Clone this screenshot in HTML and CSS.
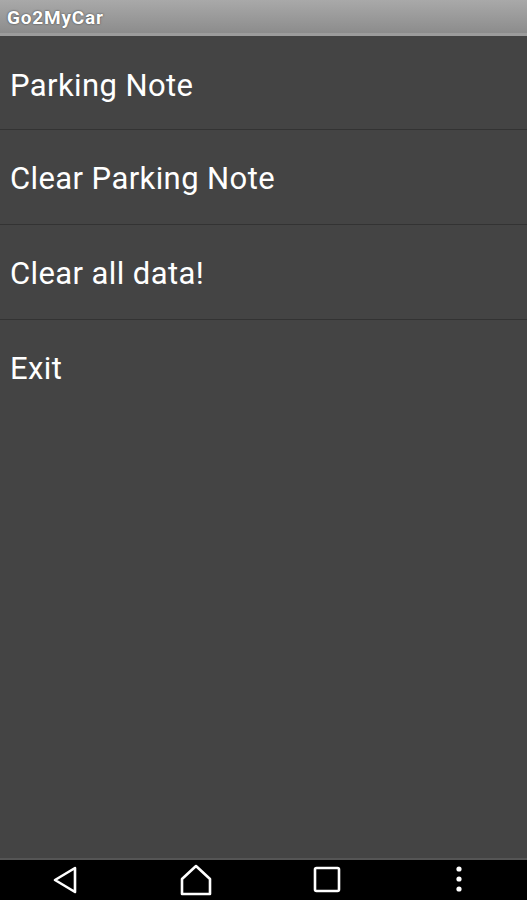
FILE: index.html
```html
<!DOCTYPE html>
<html lang="en">
<head>
  <meta charset="UTF-8">
  <title>Go2MyCar</title>
  <link rel="stylesheet" href="styles.css">
</head>
<body>

<div class="screen">
  <div class="titlebar">Go2MyCar</div>

  <ul class="menu">
    <li>Parking Note</li>
    <li>Clear Parking Note</li>
    <li>Clear all data!</li>
    <li class="last">Exit</li>
  </ul>

  <div class="navbar">
    <svg class="nav-icon" width="28" height="30" viewBox="0 0 28 30">
      <path d="M24 3 L4 15 L24 27 Z" fill="none" stroke="#fff" stroke-width="2.6" stroke-linejoin="round"/>
    </svg>
    <svg class="nav-icon" width="32" height="32" viewBox="0 0 32 32">
      <path d="M16 2 L30 15 L30 30 L2 30 L2 15 Z" fill="none" stroke="#fff" stroke-width="2.6" stroke-linejoin="round"/>
    </svg>
    <svg class="nav-icon" width="28" height="28" viewBox="0 0 28 28">
      <rect x="2" y="2" width="24" height="23" rx="1.5" fill="none" stroke="#fff" stroke-width="2.6"/>
    </svg>
    <svg class="nav-icon" width="8" height="28" viewBox="0 0 8 28">
      <circle cx="4" cy="3" r="2.6" fill="#fff"/>
      <circle cx="4" cy="13" r="2.6" fill="#fff"/>
      <circle cx="4" cy="23" r="2.6" fill="#fff"/>
    </svg>
  </div>
</div>

</body>
</html>
```

FILE: styles.css
```css
body {
  margin: 0;
  background: #444;
  font-family: Roboto, "Liberation Sans", sans-serif;
}

.screen {
  width: 527px;
  height: 900px;
  display: flex;
  flex-direction: column;
  background: #444;
}

.titlebar {
  height: 36px;
  box-sizing: border-box;
  padding: 6px 7px 0;
  background: linear-gradient(#a9a9a9, #8c8c8c);
  border-bottom: 3px solid #9c9c9c;
  color: #fff;
  font-weight: bold;
  font-size: 19px;
  letter-spacing: 0.8px;
  text-shadow: 0 0 2px #333;
}

.menu {
  list-style: none;
  margin: 0;
  padding: 0;
  flex: 1;
}

.menu li {
  height: 95px;
  box-sizing: border-box;
  padding: 30px 10px 0;
  border-bottom: 1px solid #333;
  color: #fff;
  font-size: 31px;
  letter-spacing: 0.4px;
}

.menu li:first-child {
  height: 94px;
  padding-top: 31px;
}

.menu li.last {
  border-bottom: none;
}

.navbar {
  height: 42px;
  background: #000;
  border-top: 2px solid #555;
  display: flex;
  align-items: center;
  box-sizing: border-box;
}

.nav-icon:nth-child(1) {
  margin-left: 51px;
}

.nav-icon:nth-child(2) {
  margin-left: 101px;
}

.nav-icon:nth-child(3) {
  margin-left: 101px;
}

.nav-icon:nth-child(4) {
  margin-left: 114px;
}
```
